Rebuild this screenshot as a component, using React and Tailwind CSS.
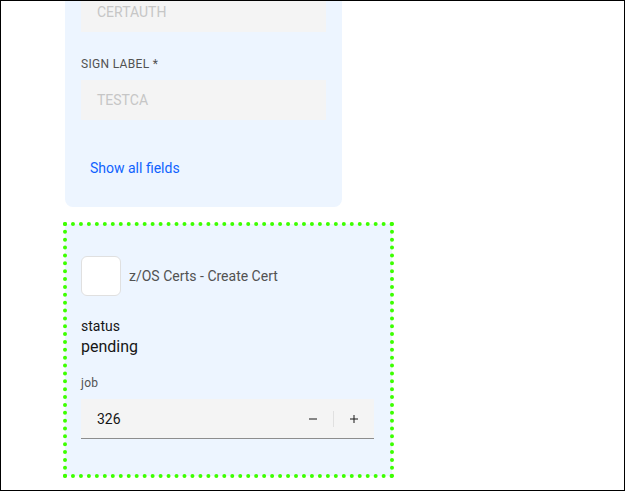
import React from 'react';

const Minus = () => (
  <svg width="16" height="16" viewBox="0 0 16 16" fill="#161616">
    <path d="M4 7.5h8v1H4z" />
  </svg>
);

const Plus = () => (
  <svg width="16" height="16" viewBox="0 0 16 16" fill="#161616">
    <path d="M8.5 7.5V4h-1v3.5H4v1h3.5V12h1V8.5H12v-1z" />
  </svg>
);

const App = () => {
  return (
    <div className="h-[491px] w-[625px] overflow-hidden border border-black bg-white font-['Roboto',sans-serif]">
      <div className="ml-[64px] -mt-[9px]">
        {/* Signing fields card (scrolled) */}
        <div className="w-[277px] rounded-b-lg bg-[#edf5ff] px-4 pb-[29px]">
          <div className="flex h-10 items-center bg-[#f4f4f4] pl-4 text-sm text-[#c6c6c6]">CERTAUTH</div>
          <label className="mt-6 mb-2 block text-xs leading-4 tracking-[0.32px] text-[#525252]">SIGN LABEL *</label>
          <div className="flex h-10 items-center bg-[#f4f4f4] pl-4 text-sm text-[#c6c6c6]">TESTCA</div>
          <button type="button" className="mt-[38px] block pl-[9px] text-sm leading-5 text-[#0f62fe]">
            Show all fields
          </button>
        </div>

        {/* Selected node card */}
        <div className="mt-[17px] w-[327px] bg-[#edf5ff] pt-8 pb-[37px] pl-4 pr-[18px] outline-4 outline-dotted outline-[#3dff00] outline-offset-[-2px]">
          <div className="flex items-center gap-2">
            <div className="h-10 w-10 rounded-md border border-[#e0e0e0] bg-white"></div>
            <span className="text-sm text-[#525252]">z/OS Certs - Create Cert</span>
          </div>

          <div className="mt-[21px] text-sm leading-[18px] text-[#161616]">status</div>
          <div className="text-base leading-6 text-[#161616]">pending</div>

          <label className="mt-4 mb-2 block text-xs leading-4 tracking-[0.32px] text-[#525252]">job</label>
          <div className="flex h-10 items-center border-b border-[#8d8d8d] bg-[#f4f4f4]">
            <span className="flex-1 pl-4 text-sm text-[#161616]">326</span>
            <button type="button" className="flex h-10 w-10 items-center justify-center">
              <Minus />
            </button>
            <div className="h-4 w-px bg-[#e0e0e0]"></div>
            <button type="button" className="flex h-10 w-10 items-center justify-center">
              <Plus />
            </button>
          </div>
        </div>
      </div>
    </div>
  );
};

export default App;
